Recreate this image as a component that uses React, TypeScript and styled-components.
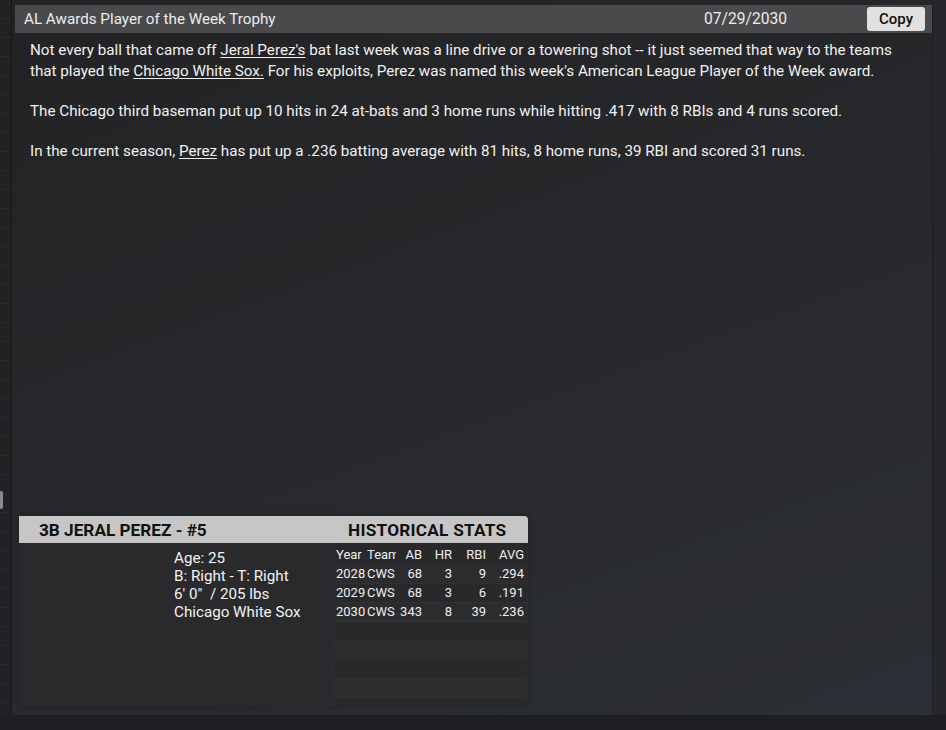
import React from 'react';
import styled, { createGlobalStyle } from 'styled-components';

const GlobalStyle = createGlobalStyle`
  html, body {
    margin: 0;
    padding: 0;
    background: #1f2023;
    font-family: Roboto, "Noto Sans", sans-serif;
  }
`;

const Screen = styled.div`
  width: 946px;
  height: 730px;
  display: flex;
  flex-direction: column;
  overflow: hidden;
  background: #1e1f23;
`;

const Body = styled.div`
  display: flex;
  height: 715px;
`;

const LeftEdge = styled.div`
  width: 11px;
  flex-shrink: 0;
  background: repeating-linear-gradient(
    180deg,
    #222224 0px,
    #222224 18px,
    #29292b 18px,
    #29292b 19px
  );
  border-right: 1px solid #17171a;
  display: flex;
  flex-direction: column;
  padding-top: 491px;
`;

const EdgeTab = styled.div`
  width: 3px;
  height: 18px;
  background: #8a8a8c;
  border-radius: 0 2px 2px 0;
`;

const RightEdge = styled.div`
  width: 13px;
  flex-shrink: 0;
  background: #25272c;
`;

const Panel = styled.div`
  flex: 1;
  display: flex;
  flex-direction: column;
  padding: 5px 0 9px 3px;
  background: linear-gradient(160deg, #232325 0%, #27282b 45%, #2c2f35 100%);
  border-right: 1px solid #1d1e21;
`;

const HeaderBar = styled.div`
  height: 28px;
  display: flex;
  align-items: center;
  background: #4a4a4c;
  color: #ececec;
  font-size: 15.2px;
  padding: 0 7px 0 9px;
`;

const Title = styled.div`
  flex: 1;
`;

const DateText = styled.div`
  width: 163px;
  font-size: 15.6px;
`;

const CopyButton = styled.button`
  width: 58px;
  height: 24px;
  border: none;
  border-radius: 3px;
  background: #e1e1e1;
  color: #111;
  font-family: Roboto, "Noto Sans", sans-serif;
  font-size: 15px;
  font-weight: 500;
  padding: 0;
`;

const Article = styled.div`
  padding: 7px 15px 0 15px;
  color: #f0f0f0;
  font-size: 15.2px;
  line-height: 21px;
  flex: 1;
`;

const Para = styled.p`
  margin: 0 0 19px 0;
`;

const Link = styled.span`
  text-decoration: underline;
  text-underline-offset: 2px;
`;

const Card = styled.div`
  width: 509px;
  margin-left: 4px;
  display: flex;
  flex-direction: column;
  box-shadow: 0 0 6px rgba(0, 0, 0, 0.25);
`;

const CardHeader = styled.div`
  height: 27px;
  background: #c6c6c6;
  border-radius: 0 4px 0 0;
  display: flex;
  align-items: center;
  color: #111;
  font-weight: 700;
  font-size: 17.2px;
`;

const HeaderName = styled.div`
  width: 329px;
  padding-left: 20px;
  box-sizing: border-box;
`;

const HeaderStats = styled.div`
  flex: 1;
  letter-spacing: 0.25px;
`;

const CardBody = styled.div`
  display: flex;
  height: 163px;
`;

const InfoBox = styled.div`
  width: 312px;
  flex-shrink: 0;
  background: #2a2a2c;
  padding: 6px 0 0 155px;
  box-sizing: border-box;
  color: #f2f2f2;
  font-size: 15.2px;
  line-height: 18px;
`;

const StatsBox = styled.div`
  width: 192px;
  flex-shrink: 0;
  margin-left: 4px;
  padding-top: 3px;
  background: #29292b;
  overflow: hidden;
`;

const StatsTable = styled.table`
  width: 192px;
  border-collapse: collapse;
  table-layout: fixed;
  color: #eeeeee;
  font-size: 13px;
`;

const Row = styled.tr<{ $alt?: boolean; $head?: boolean }>`
  height: ${(p) => (p.$head ? '18px' : '19px')};
  background: ${(p) => (p.$alt ? '#2c2c2e' : '#29292b')};
  border-bottom: 1px solid #313133;
`;

const Cell = styled.td<{ $right?: boolean; $w: number }>`
  box-sizing: border-box;
  width: ${(p) => p.$w}px;
  padding: 0 ${(p) => (p.$right ? '3px' : '0')} 0 ${(p) => (p.$right ? '0' : '1px')};
  text-align: ${(p) => (p.$right ? 'right' : 'left')};
  white-space: nowrap;
  overflow: hidden;
`;

const HeadCell = styled(Cell).attrs({ as: 'th' })`
  font-weight: 400;
`;

const cols = [
  { key: 'Year', w: 31, right: false },
  { key: 'Team', w: 30, right: false },
  { key: 'AB', w: 29, right: true },
  { key: 'HR', w: 30, right: true },
  { key: 'RBI', w: 34, right: true },
  { key: 'AVG', w: 38, right: true },
];

const stats = [
  ['2028', 'CWS', '68', '3', '9', '.294'],
  ['2029', 'CWS', '68', '3', '6', '.191'],
  ['2030', 'CWS', '343', '8', '39', '.236'],
];

const App: React.FC = () => (
  <>
    <GlobalStyle />
    <Screen>
      <Body>
        <LeftEdge>
          <EdgeTab />
        </LeftEdge>
        <Panel>
          <HeaderBar>
            <Title>AL Awards Player of the Week Trophy</Title>
            <DateText>07/29/2030</DateText>
            <CopyButton>Copy</CopyButton>
          </HeaderBar>
          <Article>
            <Para>
              Not every ball that came off <Link>Jeral Perez's</Link> bat last week was a line drive or a
              towering shot -- it just seemed that way to the teams that played the{' '}
              <Link>Chicago White Sox.</Link> For his exploits, Perez was named this week's American
              League Player of the Week award.
            </Para>
            <Para>
              The Chicago third baseman put up 10 hits in 24 at-bats and 3 home runs while hitting .417
              with 8 RBIs and 4 runs scored.
            </Para>
            <Para>
              In the current season, <Link>Perez</Link> has put up a .236 batting average with 81 hits, 8
              home runs, 39 RBI and scored 31 runs.
            </Para>
          </Article>
          <Card>
            <CardHeader>
              <HeaderName>3B JERAL PEREZ - #5</HeaderName>
              <HeaderStats>HISTORICAL STATS</HeaderStats>
            </CardHeader>
            <CardBody>
              <InfoBox>
                <div>Age: 25</div>
                <div>B: Right - T: Right</div>
                <div>6' 0"&nbsp; / 205 lbs</div>
                <div>Chicago White Sox</div>
              </InfoBox>
              <StatsBox>
                <StatsTable>
                  <thead>
                    <Row $head>
                      {cols.map((c) => (
                        <HeadCell key={c.key} $w={c.w} $right={c.right}>
                          {c.key}
                        </HeadCell>
                      ))}
                    </Row>
                  </thead>
                  <tbody>
                    {stats.map((r, i) => (
                      <Row key={r[0]} $alt={i % 2 === 0}>
                        {r.map((v, j) => (
                          <Cell key={j} $w={cols[j].w} $right={cols[j].right}>
                            {v}
                          </Cell>
                        ))}
                      </Row>
                    ))}
                    {[0, 1, 2, 3, 4].map((i) => (
                      <Row key={'e' + i} $alt={i % 2 === 1}>
                        <Cell $w={192} colSpan={6} />
                      </Row>
                    ))}
                  </tbody>
                </StatsTable>
              </StatsBox>
            </CardBody>
          </Card>
        </Panel>
        <RightEdge />
      </Body>
    </Screen>
  </>
);

export default App;
